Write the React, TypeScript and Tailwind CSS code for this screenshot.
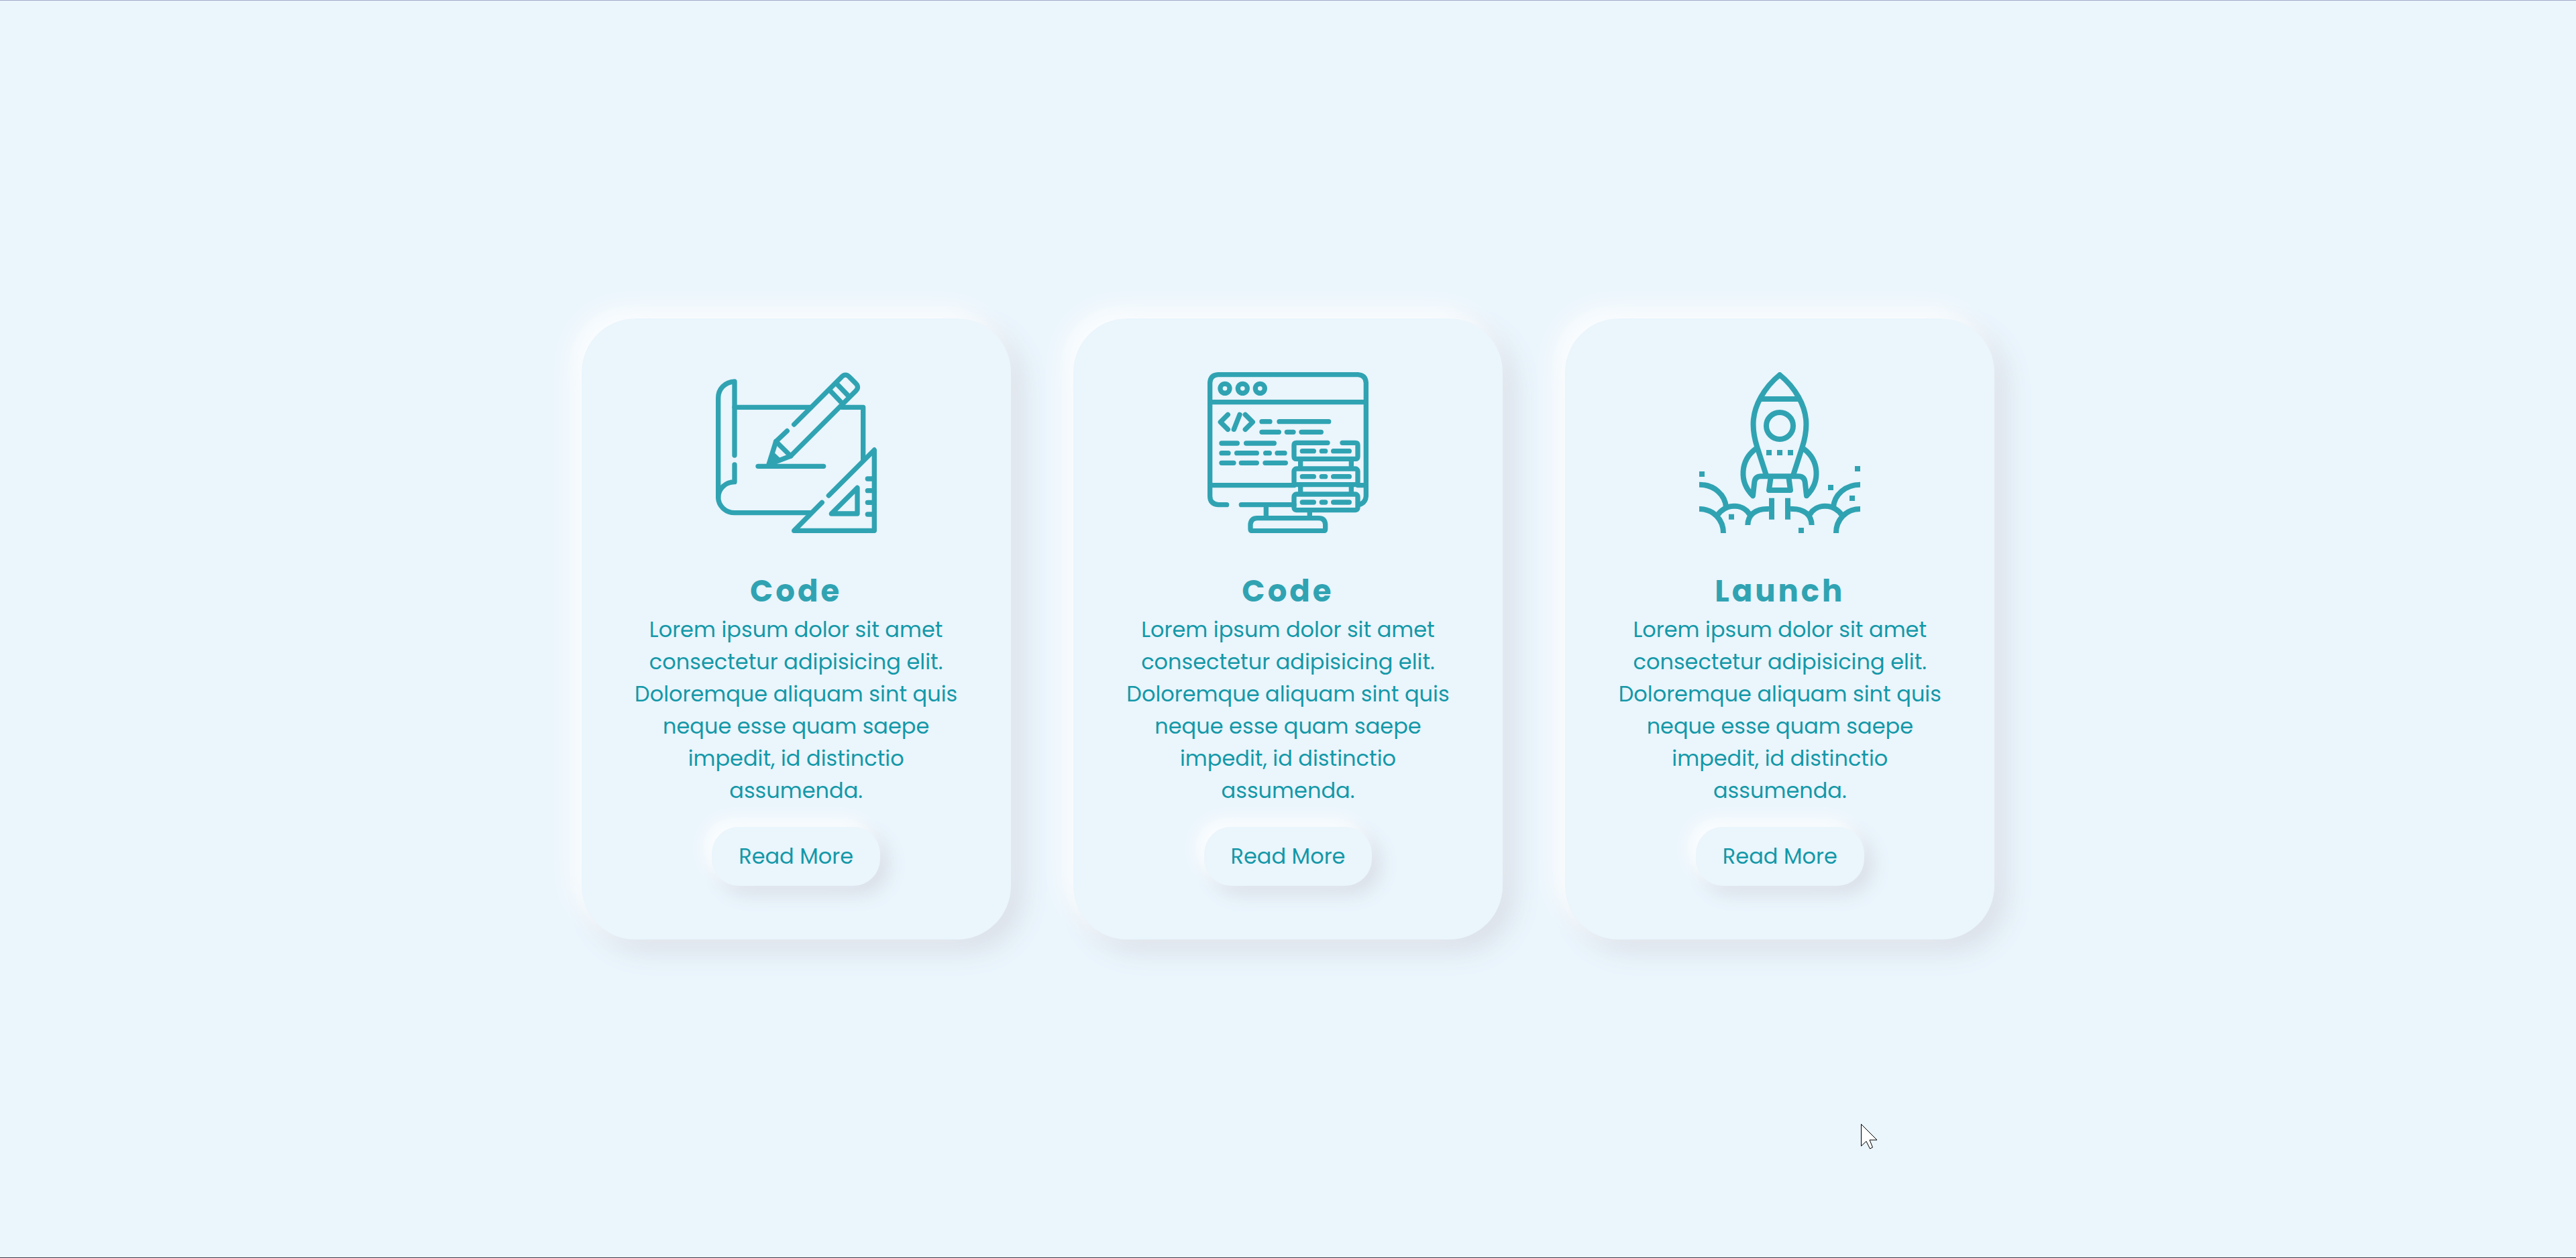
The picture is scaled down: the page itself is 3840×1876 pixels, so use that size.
import type { ReactNode } from "react";

function DesignIcon() {
  return (
    <svg
      viewBox="81 75 720 720"
      className="size-60"
      fill="none"
      stroke="currentColor"
      strokeWidth={22}
      strokeLinecap="round"
      strokeLinejoin="round"
      aria-hidden="true"
    >
      <path d="M165 447V117C122 119 92 150 92 190V634C92 673 124 704 165 704H507" />
      <path d="M165 489V566C124 567 92 596 92 636" />
      <path d="M165 232H507M645 232H740V468" />
      <path d="M431 309L643 97Q661 78 679 97L706 124Q725 142 706 160L416 450L350 385L400 338" />
      <path d="M590 155L647 215M620 125L677 184" />
      <path d="M350 385L318 488L416 450" />
      <path d="M338 436L366 462L316 488Z" fill="currentColor" strokeWidth={8} />
      <path d="M270 496H563" />
      <path d="M586 627L790 423V784H431L556 658" />
      <path d="M714 592V708H598Z" />
      <path d="M760 552H790M760 605H790M760 658H790M760 711H790" />
    </svg>
  );
}

function CodeIcon() {
  return (
    <svg
      viewBox="75 75 720 720"
      className="size-60"
      fill="none"
      stroke="currentColor"
      strokeWidth={22}
      strokeLinecap="round"
      strokeLinejoin="round"
      aria-hidden="true"
    >
      <path d="M161 668H122Q86 664 86 630V122Q88 88 122 86H748Q782 88 784 122V630Q782 660 752 668" />
      <path d="M86 209H784M86 581H462M748 581H784M226 668H462" />
      <circle cx="153" cy="148" r="21" />
      <circle cx="232" cy="148" r="21" />
      <circle cx="310" cy="148" r="21" />
      <path d="M166 265L133 298L166 331M219 265L193 331M244 265L277 298L244 331" />
      <path d="M318 296H354M396 296H617M318 343H394M430 343H459M495 343H583" />
      <path d="M138 393H208M248 393H373M138 437H168M206 437H295M335 437H352M387 437H420M138 481H192M226 481H295M333 481H424" />
      <path d="M612 391H473Q462 391 462 402V452Q462 463 473 463H736Q747 463 747 452V402Q747 391 736 391H678" />
      <rect x="462" y="507" width="285" height="71" rx="11" />
      <rect x="462" y="621" width="285" height="71" rx="11" />
      <path d="M491 468V502M718 468V502M491 583V616M718 583V616" />
      <path d="M499 428H550M586 428H602M638 428H709M499 542H550M586 542H602M638 542H709M499 657H550M586 657H602M638 657H709" />
      <path d="M337 673V722M532 697V722" />
      <path d="M267 776V756Q270 728 297 728H572Q600 728 602 756V776Q602 785 593 785H276Q267 785 267 776Z" />
    </svg>
  );
}

function RocketIcon() {
  return (
    <svg
      viewBox="69 75 720 720"
      className="size-60"
      fill="none"
      stroke="currentColor"
      strokeWidth={24}
      strokeLinejoin="round"
      aria-hidden="true"
    >
      <path d="M370 540L328 410C298 315 309 250 345 186Q378 128 429 87Q480 128 513 186C549 250 560 315 530 410L488 540" />
      <path d="M345 195H513" />
      <circle cx="429" cy="315" r="60" />
      <path d="M322 418C252 470 246 566 309 628L316 566Q320 541 345 541H513Q538 541 542 566L549 628C612 566 606 470 536 418" />
      <path d="M389 545L381 603H477L469 545" />
      <path d="M393 638V734M465 638V734" />
      <path d="M69 578C136 578 186 624 189 680M69 687C134 687 177 736 177 795" />
      <path d="M151 714C192 659 266 664 295 712M286 759C286 714 322 683 381 687" />
      <path d="M789 578C722 578 672 624 669 680M789 687C724 687 681 736 681 795" />
      <path d="M707 714C666 659 592 664 563 712M572 759C572 714 536 683 477 687" />
      <path
        stroke="none"
        fill="currentColor"
        d="M369 423h24v24h-24zM417 423h24v24h-24zM465 423h24v24h-24zM69 519h24v24h-24zM201 710h24v24h-24zM513 771h24v24h-24zM645 579h24v24h-24zM741 627h24v24h-24zM765 495h24v24h-24z"
      />
    </svg>
  );
}

function Card({ title, icon }: { title: string; icon: ReactNode }) {
  return (
    <article className="flex w-[640px] flex-col items-center rounded-[80px] bg-[#eaf5fc] px-19 py-20 text-center shadow-[-16px_-16px_40px_rgba(255,255,255,0.9),16px_16px_40px_#d9dee7]">
      {icon}
      <h2 className="mt-[54px] text-[45px] leading-[66px] font-bold tracking-[4px]">{title}</h2>
      <p className="text-[32px] leading-[48px] text-[#1498a8]">
        Lorem ipsum dolor sit amet
        <br />
        consectetur adipisicing elit.
        <br />
        Doloremque aliquam sint quis
        <br />
        neque esse quam saepe
        <br />
        impedit, id distinctio
        <br />
        assumenda.
      </p>
      <button
        type="button"
        className="mt-[30px] rounded-[40px] bg-[#eaf5fc] px-10 py-5 text-[32px] leading-[48px] text-[#1498a8] shadow-[-12px_-12px_28px_rgba(255,255,255,0.9),12px_12px_28px_#d9dee7]"
      >
        Read More
      </button>
    </article>
  );
}

export default function App() {
  return (
    <div className="relative flex min-h-screen flex-col border-t border-b border-t-[#9fabc8] border-b-[#3d3d4b] bg-[#eaf5fc] font-[Poppins,Inter,sans-serif] text-[#30a3b2]">
      <main className="mx-auto flex w-full max-w-[2200px] flex-1 items-center justify-around">
        <Card title="Code" icon={<DesignIcon />} />
        <Card title="Code" icon={<CodeIcon />} />
        <Card title="Launch" icon={<RocketIcon />} />
      </main>
      <svg
        viewBox="0 0 26 40"
        className="absolute top-[1674px] left-[2773px] h-10 w-[26px]"
        fill="white"
        stroke="black"
        aria-hidden="true"
      >
        <path d="M1.500 1.500V34L9 27L14.500 38L18.500 36L14 25H25Z" />
      </svg>
    </div>
  );
}
